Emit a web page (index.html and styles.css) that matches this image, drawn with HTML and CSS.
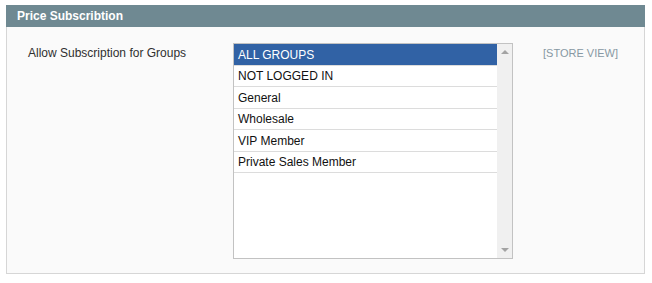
FILE: index.html
```html
<!DOCTYPE html>
<html>
<head>
    <meta charset="UTF-8">
    <title>Price Subscribtion</title>
    <link rel="stylesheet" href="styles.css">
</head>
<body>
    <div class="section">
        <div class="section-head">Price Subscribtion</div>
        <div class="section-body">
            <label class="field-label">Allow Subscription for Groups</label>
            <div class="listbox">
                <ul class="options">
                    <li class="option selected">ALL GROUPS</li>
                    <li class="option">NOT LOGGED IN</li>
                    <li class="option">General</li>
                    <li class="option">Wholesale</li>
                    <li class="option">VIP Member</li>
                    <li class="option">Private Sales Member</li>
                </ul>
                <!-- fake scrollbar -->
                <div class="scrollbar">
                    <span class="arrow arrow-up"></span>
                    <span class="arrow arrow-down"></span>
                </div>
            </div>
            <span class="scope">[STORE VIEW]</span>
        </div>
    </div>
</body>
</html>
```

FILE: styles.css
```css
body {
    margin: 0;
    padding: 0;
    background-color: #FFFFFF;
    font-family: "Liberation Sans", Arial, sans-serif;
    font-size: 12px;
    color: #2f2f2f;
}
.section {
    margin: 5px 7px 0 6px;
}
.section-head {
    background-color: #6f8992;
    color: #FFFFFF;
    font-weight: bold;
    height: 22px;
    line-height: 22px;
    padding-left: 11px;
}
.section-body {
    display: grid;
    grid-template-columns: 205px 280px auto;
    align-items: start;
    background-color: #fafafa;
    border: 1px solid #d6d6d6;
    border-top: none;
    padding: 16px 0 14px 21px;
}
.field-label {
    padding-top: 3px;
    line-height: 15px;
}
.listbox {
    display: flex;
    height: 214px;
    border: 1px solid #c2c2c2;
    background-color: #FFFFFF;
}
.options {
    flex: 1;
    list-style: none;
    margin: 0;
    padding: 0;
}
.option {
    height: 20px;
    line-height: 21px;
    padding-left: 4px;
    border-bottom: 1px solid #dcdcdc;
    color: #111111;
}
.option:nth-child(odd) {
    height: 21px;
    line-height: 22px;
}
.option.selected {
    background-color: #3162a5;
    color: #FFFFFF;
}
.scrollbar {
    width: 15px;
    background-color: #f0f0f0;
    display: flex;
    flex-direction: column;
    justify-content: space-between;
    align-items: center;
    padding: 6px 0;
}
.arrow {
    width: 0;
    height: 0;
    border-left: 4px solid transparent;
    border-right: 4px solid transparent;
}
.arrow-up {
    border-bottom: 4px solid #a3a3a3;
}
.arrow-down {
    border-top: 4px solid #a3a3a3;
}
.scope {
    font-size: 11px;
    color: #8798a3;
    padding: 4px 0 0 30px;
}
```
